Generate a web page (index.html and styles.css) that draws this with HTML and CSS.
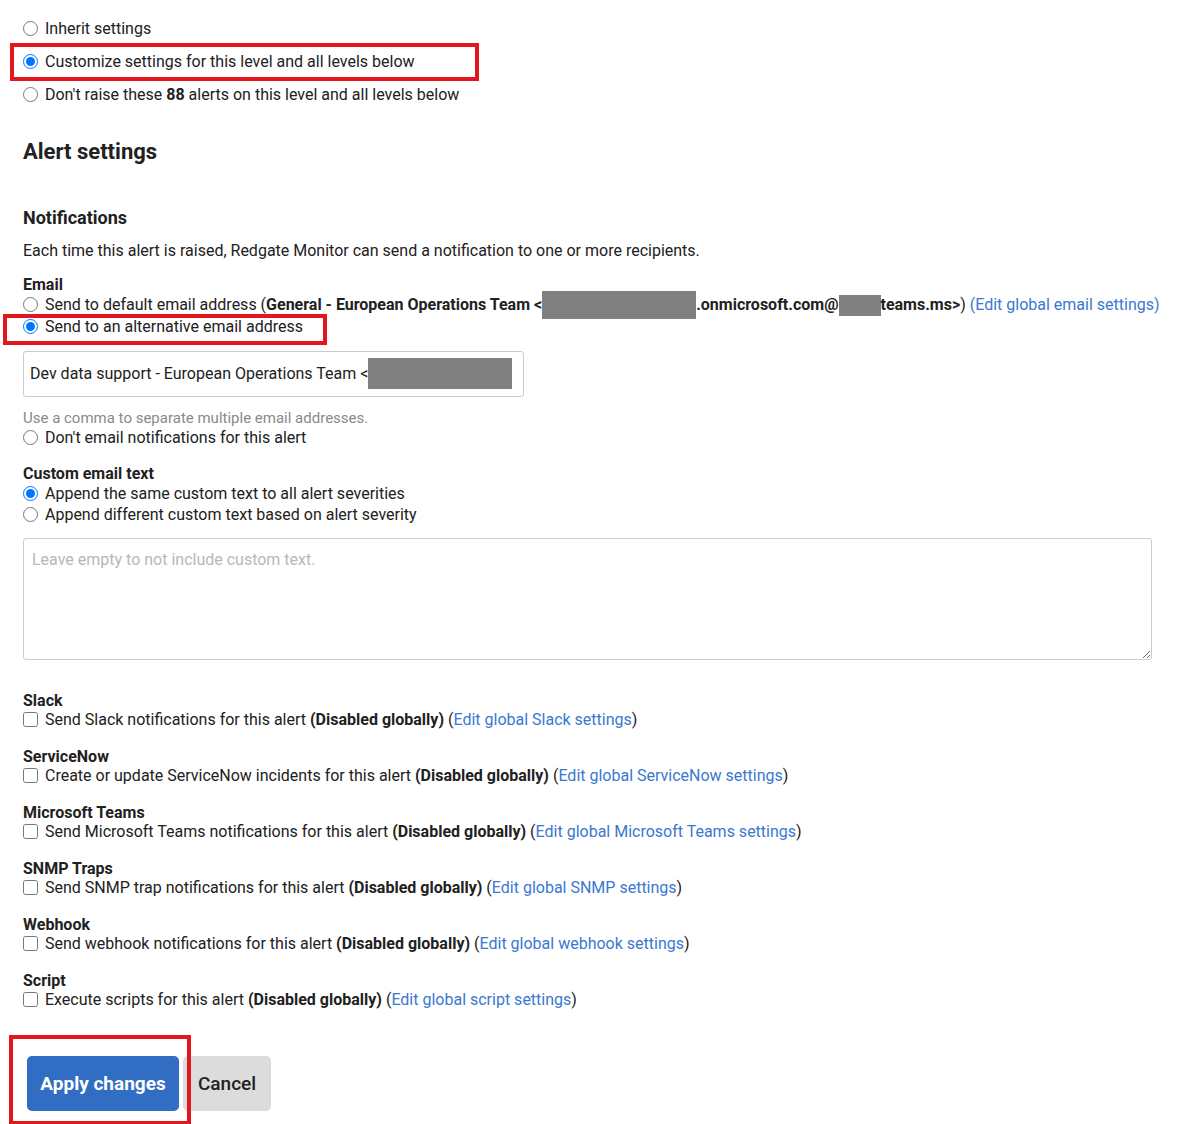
FILE: index.html
```html
<!DOCTYPE html>
<html lang="en">

<head>
    <meta charset="UTF-8">
    <meta name="viewport" content="width=device-width, initial-scale=1.0">
    <title>Alert settings</title>
    <link rel="stylesheet" href="styles.css">
</head>

<body>
    <div class="scope">
        <label class="scope-row"><input type="radio" name="scope"> Inherit settings</label>
        <label class="scope-row marked mark-scope"><input type="radio" name="scope" checked> Customize settings for this level and all levels below</label>
        <label class="scope-row"><input type="radio" name="scope"> Don't raise these <b>88</b> alerts on this level and all levels below</label>
    </div>

    <h2 class="page-title">Alert settings</h2>

    <h3 class="section-title">Notifications</h3>
    <p class="intro">Each time this alert is raised, Redgate Monitor can send a notification to one or more recipients.</p>

    <div class="group group-email">
        <div class="group-label">Email</div>
        <label class="opt"><input type="radio" name="email"> Send to default email address (<b>General - European Operations Team &lt;<span class="redact redact-long"></span>.onmicrosoft.com@<span class="redact redact-short"></span>teams.ms&gt;</b>) <a href="#">(Edit global email settings)</a></label>
        <label class="opt marked mark-alt"><input type="radio" name="email" checked> Send to an alternative email address</label>
        <div class="text-field">
            <span>Dev data support - European Operations Team &lt;</span><span class="redact redact-field"></span>
        </div>
        <div class="hint">Use a comma to separate multiple email addresses.</div>
        <label class="opt"><input type="radio" name="email"> Don't email notifications for this alert</label>
    </div>

    <div class="group group-custom">
        <div class="group-label">Custom email text</div>
        <label class="opt"><input type="radio" name="custom" checked> Append the same custom text to all alert severities</label>
        <label class="opt"><input type="radio" name="custom"> Append different custom text based on alert severity</label>
        <textarea class="custom-text" placeholder="Leave empty to not include custom text."></textarea>
    </div>

    <div class="channels">
        <div class="group">
            <div class="group-label">Slack</div>
            <label class="opt"><input type="checkbox"> Send Slack notifications for this alert <b>(Disabled globally)</b> (<a href="#">Edit global Slack settings</a>)</label>
        </div>
        <div class="group">
            <div class="group-label">ServiceNow</div>
            <label class="opt"><input type="checkbox"> Create or update ServiceNow incidents for this alert <b>(Disabled globally)</b> (<a href="#">Edit global ServiceNow settings</a>)</label>
        </div>
        <div class="group">
            <div class="group-label">Microsoft Teams</div>
            <label class="opt"><input type="checkbox"> Send Microsoft Teams notifications for this alert <b>(Disabled globally)</b> (<a href="#">Edit global Microsoft Teams settings</a>)</label>
        </div>
        <div class="group">
            <div class="group-label">SNMP Traps</div>
            <label class="opt"><input type="checkbox"> Send SNMP trap notifications for this alert <b>(Disabled globally)</b> (<a href="#">Edit global SNMP settings</a>)</label>
        </div>
        <div class="group">
            <div class="group-label">Webhook</div>
            <label class="opt"><input type="checkbox"> Send webhook notifications for this alert <b>(Disabled globally)</b> (<a href="#">Edit global webhook settings</a>)</label>
        </div>
        <div class="group">
            <div class="group-label">Script</div>
            <label class="opt"><input type="checkbox"> Execute scripts for this alert <b>(Disabled globally)</b> (<a href="#">Edit global script settings</a>)</label>
        </div>
    </div>

    <div class="actions">
        <span class="marked mark-apply"><button class="btn btn-primary">Apply changes</button></span>
        <button class="btn btn-default">Cancel</button>
    </div>
</body>

</html>
```

FILE: styles.css
```css
*,
*::before,
*::after {
    box-sizing: border-box;
}

body {
    margin: 0;
    padding: 0 23px 20px;
    font-family: Roboto, "Liberation Sans", Arial, sans-serif;
    font-size: 16px;
    color: #212121;
    background: #fff;
}

b {
    font-weight: 700;
}

a {
    color: #3a78d1;
    text-decoration: none;
}

input[type="radio"],
input[type="checkbox"] {
    width: 15px;
    height: 15px;
    margin: 0 3px 0 0;
    vertical-align: -2px;
}

/* scope choice at the top */
.scope {
    padding-top: 12px;
}

.scope-row {
    display: block;
    line-height: 33px;
}

/* red annotation frames */
.marked {
    position: relative;
}

.marked::after {
    content: "";
    position: absolute;
    border: 4px solid #e3161d;
    pointer-events: none;
}

.mark-scope::after {
    left: -13px;
    top: -2px;
    width: 469px;
    height: 38px;
}

.mark-alt::after {
    left: -20px;
    top: -2px;
    width: 324px;
    height: 31px;
}

.mark-apply {
    display: inline-block;
}

.mark-apply::after {
    left: -18px;
    top: -21px;
    width: 182px;
    height: 90px;
}

.page-title {
    margin: 28px 0 0;
    font-size: 22px;
    line-height: 26px;
    font-weight: 700;
}

.section-title {
    margin: 42px 0 0;
    font-size: 18px;
    line-height: 22px;
    font-weight: 700;
}

.intro {
    margin: 11px 0 0;
    line-height: 22px;
}

.group-label {
    font-weight: 700;
    line-height: 19px;
}

.opt {
    display: block;
    line-height: 21px;
}

.group-email {
    margin-top: 13px;
}

.redact {
    display: inline-block;
    background: #808080;
    vertical-align: middle;
}

.redact-long {
    width: 154px;
    height: 28px;
    margin: -5px 0 -3px;
}

.redact-short {
    width: 42px;
    height: 21px;
    margin: -2px 0 -1px;
}

.text-field {
    display: flex;
    align-items: center;
    width: 501px;
    height: 46px;
    margin-top: 14px;
    padding: 0 6px;
    border: 1px solid #ccc;
    border-radius: 3px;
    white-space: nowrap;
}

.redact-field {
    width: 144px;
    height: 31px;
}

.hint {
    margin-top: 12px;
    font-size: 15px;
    line-height: 18px;
    color: #8a8a8a;
}

.group-custom {
    margin-top: 16px;
}

.custom-text {
    display: block;
    width: 1129px;
    height: 122px;
    margin-top: 13px;
    padding: 10px 8px;
    border: 1px solid #ccc;
    border-radius: 3px;
    font-family: inherit;
    font-size: 16px;
    line-height: 22px;
    color: #212121;
}

.custom-text::placeholder {
    color: #b8b8b8;
}

.channels {
    margin-top: 32px;
    display: flex;
    flex-direction: column;
    gap: 18px;
}

.channels .group-label {
    line-height: 18px;
}

.channels .opt {
    line-height: 20px;
}

.actions {
    display: flex;
    gap: 4px;
    margin-top: 46px;
    padding-left: 4px;
}

.btn {
    height: 55px;
    padding: 0;
    border: none;
    border-radius: 5px;
    font-family: inherit;
    font-size: 19px;
    white-space: nowrap;
    cursor: pointer;
}

.btn-primary {
    display: block;
    width: 152px;
    background: #316dc2;
    color: #fff;
    font-weight: 700;
}

.btn-default {
    width: 88px;
    background: #dcdcdc;
    color: #222;
    font-weight: 500;
}
```
